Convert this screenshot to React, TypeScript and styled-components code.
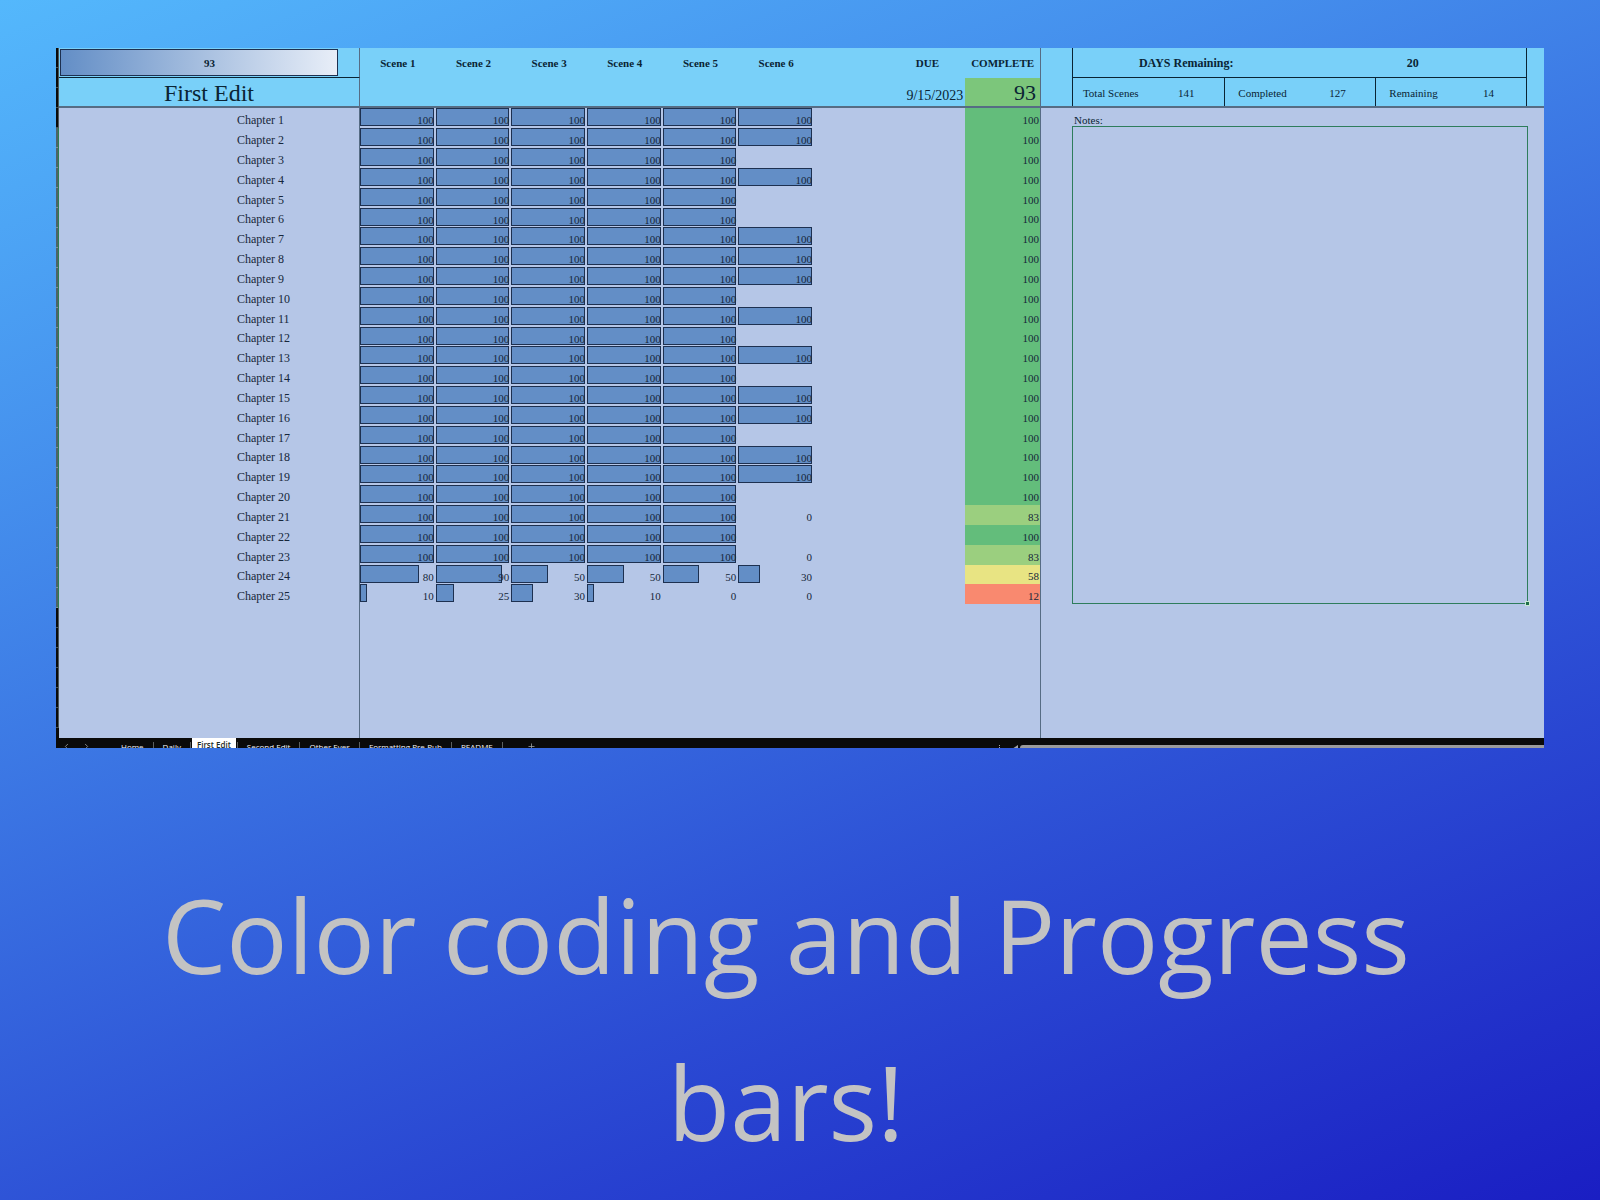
import React from "react";
import styled, { createGlobalStyle } from "styled-components";
import { ChevronLeft, ChevronRight, Plus } from "lucide-react";

const serif = `"Liberation Serif", "Times New Roman", serif`;

const color = {
  header: "#79d0f9",
  sheet: "#b5c6e7",
  bar: "#638ec6",
  barEdge: "#1d3050",
  rule: "#566c84",
  ink: "#16263a",
  heading: "#0a2434",
  black: "#0a0a0a",
};

const GlobalStyle = createGlobalStyle`
  * { box-sizing: border-box; }
  body { margin: 0; font-family: ${serif}; }
`;

const Page = styled.main`
  min-height: 100vh;
  padding: 48px 56px 0;
  background: linear-gradient(158deg, #54b8fc, #1a1ec3);
`;

const Sheet = styled.section`
  display: flex;
  flex-direction: column;
  overflow: hidden;
`;

const Panes = styled.div`
  display: grid;
  grid-template-columns: 3px minmax(0, 982fr) minmax(0, 503fr);
  background: ${color.sheet};
`;

const Gutter = styled.div`
  display: flex;
  flex-direction: column;
  background: ${color.black};
`;

const GutterRows = styled.div<{ $rows: number; $selected?: boolean }>`
  height: ${(p) => p.$rows * 20}px;
  border-right: 1px solid ${(p) => (p.$selected ? "#2f7d52" : "#4a5557")};
  background: repeating-linear-gradient(
    ${(p) => (p.$selected ? "#4e6466" : color.black)} 0 19px,
    ${(p) => (p.$selected ? "#7d9396" : "#4a5557")} 19px 20px
  );
`;

const Table = styled.table`
  width: 100%;
  table-layout: fixed;
  border-collapse: separate;
  border-spacing: 0;
  color: ${color.ink};
  font-size: 11px;
  line-height: 12px;

  th,
  td {
    padding: 0;
  }

  th:first-child,
  td:first-child,
  th:last-child,
  td:last-child {
    border-right: 1px solid ${color.rule};
  }
`;

const LabelCol = styled.col`
  width: 301px;
`;

const HeadRow = styled.tr`
  height: 30px;
  background: ${color.header};
  color: ${color.heading};
`;

const TitleRow = styled(HeadRow)`
  th,
  td {
    border-bottom: 2px solid ${color.rule};
    vertical-align: bottom;
  }
`;

const OverallCell = styled.th`
  border-bottom: 1px solid ${color.heading};
`;

const Overlay = styled.div`
  display: grid;
  height: 29px;
  padding-left: 1px;
  align-items: center;

  > * {
    grid-area: 1 / 1;
  }
`;

const OverallBar = styled.div`
  height: 27px;
  border: 1px solid ${color.barEdge};
  background: linear-gradient(90deg, ${color.bar}, #e8eef8);
`;

const SheetName = styled.th`
  font-size: 24px;
  font-weight: 400;
  line-height: 26px;
`;

const DueDate = styled.td`
  font-size: 14px;
  line-height: 20px;
  text-align: right;

  && {
    padding-right: 2px;
  }
`;

const TotalCell = styled.td`
  background: #7cc67b;
  font-size: 22px;
  line-height: 26px;
  text-align: right;

  && {
    padding-right: 4px;
  }
`;

const ChapterRow = styled.tr`
  height: 20px;

  &:nth-child(6n) {
    height: 19px;
  }
`;

const ChapterName = styled.th`
  font-size: 12px;
  font-weight: 400;
  line-height: 14px;
  text-align: left;
  vertical-align: bottom;

  && {
    padding: 0 0 1px 178px;
  }
`;

const SceneCell = styled.td`
  vertical-align: top;

  && {
    padding-right: 2px;
  }
`;

const SceneBox = styled.div`
  display: grid;
  height: 18px;

  > * {
    grid-area: 1 / 1;
  }
`;

const Bar = styled.div`
  border: 1px solid ${color.barEdge};
  background: ${color.bar};
`;

const Value = styled.span`
  align-self: end;
  text-align: right;
`;

const CompleteCell = styled.td<{ $tone: string }>`
  background: ${(p) => p.$tone};
  text-align: right;
  vertical-align: bottom;

  && {
    padding: 0 1px 2px 0;
  }
`;

const EmptyRow = styled.tr`
  height: 134px;
`;

const Side = styled.aside`
  display: flex;
  flex-direction: column;
  color: ${color.heading};
  font-size: 11px;
  line-height: 12px;
`;

const SideHead = styled.div`
  height: 60px;
  padding: 0 17px 0 31px;
  border-bottom: 2px solid ${color.rule};
  background: ${color.header};
`;

const Stats = styled.div`
  display: grid;
  grid-template-rows: 30px 28px;
  border: solid ${color.heading};
  border-width: 0 1px;
`;

const DaysRow = styled.div`
  display: grid;
  grid-template-columns: 1fr 1fr;
  align-items: center;
  border-bottom: 1px solid ${color.heading};
  font-size: 12px;
  font-weight: 700;
  text-align: center;
`;

const CountRow = styled.div`
  display: grid;
  grid-template-columns: repeat(3, 1fr);
`;

const Count = styled.div`
  display: grid;
  grid-template-columns: 1fr 1fr;
  align-items: center;
  padding-top: 2px;
  text-align: center;

  & + & {
    border-left: 1px solid ${color.heading};
  }
`;

const Notes = styled.div`
  position: relative;
  display: flex;
  flex-direction: column;
  margin: 0 16px 0 31px;
`;

const NotesLabel = styled.label`
  height: 18px;
  padding: 6px 0 0 2px;
`;

const NotesBox = styled.textarea`
  display: block;
  width: 100%;
  height: 478px;
  padding: 4px;
  border: 1px solid #2e7d5c;
  outline: 0;
  background: transparent;
  color: ${color.ink};
  font: 11px/12px ${serif};
  resize: none;
`;

const FillHandle = styled.span`
  position: absolute;
  right: -2px;
  bottom: -2px;
  width: 5px;
  height: 5px;
  border: 1px solid #c9e6d4;
  background: #1f6f4a;
`;

const TabBar = styled.nav`
  display: flex;
  align-items: flex-start;
  height: 10px;
  overflow: hidden;
  background: ${color.black};
`;

const IconButton = styled.button`
  display: flex;
  justify-content: center;
  width: 20px;
  padding: 4px 0 0;
  border: 0;
  background: none;
  color: #a4a9a9;
`;

const Tabs = styled.div`
  display: flex;
  margin: 0 18px 0 17px;
`;

const Tab = styled.button<{ $active?: boolean }>`
  display: flex;
  align-items: flex-start;
  height: 16px;
  padding: ${(p) => (p.$active ? "1px 5px 0" : "3px 8px 0")};
  border: 0;
  background: ${(p) => (p.$active ? "#ffffff" : "none")};
  color: ${(p) => (p.$active ? "#1c2a24" : "#f2f2f2")};
  font: ${(p) => (p.$active ? 600 : 400)} 8px/12px "Open Sans", "Noto Sans", sans-serif;
  white-space: nowrap;
`;

const TabRule = styled.span`
  width: 1px;
  height: 12px;
  margin: 4px 1px 0;
  background: #5c6060;
`;

const ScrollArea = styled.div`
  display: flex;
  gap: 2px;
  width: 545px;
  margin-left: auto;
  padding-top: 7px;
`;

const Grip = styled.span`
  width: 1px;
  height: 6px;
  margin-right: 9px;
  background: repeating-linear-gradient(#a5a5a5 0 1px, transparent 1px 2px);
`;

const ScrollArrow = styled.svg`
  width: 7px;
  height: 8px;
  fill: #a5a5a5;
`;

const ScrollThumb = styled.div`
  flex: 1;
  height: 8px;
  border-radius: 3px 0 0 0;
  background: #9b9b9b;
`;

const Caption = styled.h1`
  margin: 103px 28px 0 0;
  color: #c3c3c3;
  font-family: "Open Sans", "Noto Sans", sans-serif;
  font-size: 102px;
  font-weight: 400;
  line-height: 167px;
  text-align: center;
`;

const sceneNames = ["Scene 1", "Scene 2", "Scene 3", "Scene 4", "Scene 5", "Scene 6"];

type Chapter = { scenes: (number | null)[]; complete: number };

const sixScenes = new Set([1, 2, 4, 7, 8, 9, 11, 13, 15, 16, 18, 19]);

const finished = (n: number): Chapter => ({
  scenes: [100, 100, 100, 100, 100, sixScenes.has(n) ? 100 : null],
  complete: 100,
});

const inProgress: Record<number, Chapter> = {
  21: { scenes: [100, 100, 100, 100, 100, 0], complete: 83 },
  23: { scenes: [100, 100, 100, 100, 100, 0], complete: 83 },
  24: { scenes: [80, 90, 50, 50, 50, 30], complete: 58 },
  25: { scenes: [10, 25, 30, 10, 0, 0], complete: 12 },
};

const chapters = Array.from({ length: 25 }, (_, i) => inProgress[i + 1] ?? finished(i + 1));

function tone(value: number) {
  if (value >= 100) return "#63bd7b";
  if (value >= 80) return "#9bcf7f";
  if (value >= 50) return "#e8e483";
  return "#f9896f";
}

const counts = [
  ["Total Scenes", 141],
  ["Completed", 127],
  ["Remaining", 14],
] as const;

const tabs = ["Home", "Daily", "First Edit", "Second Edit", "Other Eyes", "Formatting Pre-Pub", "README"];

function ProgressTable() {
  return (
    <Table>
      <colgroup>
        <LabelCol />
        <col span={9} />
      </colgroup>
      <thead>
        <HeadRow>
          <OverallCell>
            <Overlay>
              <OverallBar style={{ width: "93%" }} />
              <span>93</span>
            </Overlay>
          </OverallCell>
          {sceneNames.map((name) => (
            <th key={name}>{name}</th>
          ))}
          <td />
          <th>DUE</th>
          <th>COMPLETE</th>
        </HeadRow>
        <TitleRow>
          <SheetName>First Edit</SheetName>
          <td colSpan={7} />
          <DueDate>9/15/2023</DueDate>
          <TotalCell>93</TotalCell>
        </TitleRow>
      </thead>
      <tbody>
        {chapters.map((chapter, i) => (
          <ChapterRow key={i}>
            <ChapterName scope="row">Chapter {i + 1}</ChapterName>
            {chapter.scenes.map((value, s) => (
              <SceneCell key={s}>
                {value !== null && (
                  <SceneBox>
                    {value > 0 && <Bar style={{ width: `${value}%` }} />}
                    <Value>{value}</Value>
                  </SceneBox>
                )}
              </SceneCell>
            ))}
            <td colSpan={2} />
            <CompleteCell $tone={tone(chapter.complete)}>{chapter.complete}</CompleteCell>
          </ChapterRow>
        ))}
      </tbody>
      <tfoot>
        <EmptyRow>
          <td />
          <td colSpan={8} />
          <td />
        </EmptyRow>
      </tfoot>
    </Table>
  );
}

function SidePanel() {
  return (
    <Side>
      <SideHead>
        <Stats>
          <DaysRow>
            <span>DAYS Remaining:</span>
            <span>20</span>
          </DaysRow>
          <CountRow>
            {counts.map(([label, value]) => (
              <Count key={label}>
                <span>{label}</span>
                <span>{value}</span>
              </Count>
            ))}
          </CountRow>
        </Stats>
      </SideHead>
      <Notes>
        <NotesLabel htmlFor="notes">Notes:</NotesLabel>
        <NotesBox id="notes" />
        <FillHandle />
      </Notes>
    </Side>
  );
}

function SheetTabs() {
  return (
    <TabBar>
      <IconButton aria-label="Previous sheet">
        <ChevronLeft size={9} />
      </IconButton>
      <IconButton aria-label="Next sheet">
        <ChevronRight size={9} />
      </IconButton>
      <Tabs>
        {tabs.map((name) => (
          <React.Fragment key={name}>
            <Tab $active={name === "First Edit"}>{name}</Tab>
            <TabRule />
          </React.Fragment>
        ))}
      </Tabs>
      <IconButton aria-label="Add sheet">
        <Plus size={9} />
      </IconButton>
      <ScrollArea>
        <Grip />
        <ScrollArrow viewBox="0 0 7 8">
          <path d="M7 0v8L1 4z" />
        </ScrollArrow>
        <ScrollThumb />
      </ScrollArea>
    </TabBar>
  );
}

export default function App() {
  return (
    <>
      <GlobalStyle />
      <Page>
        <Sheet>
          <Panes>
            <Gutter>
              <GutterRows $rows={4} />
              <GutterRows $rows={24} $selected />
              <GutterRows $rows={6} />
            </Gutter>
            <ProgressTable />
            <SidePanel />
          </Panes>
          <SheetTabs />
        </Sheet>
        <Caption>Color coding and Progress bars!</Caption>
      </Page>
    </>
  );
}
